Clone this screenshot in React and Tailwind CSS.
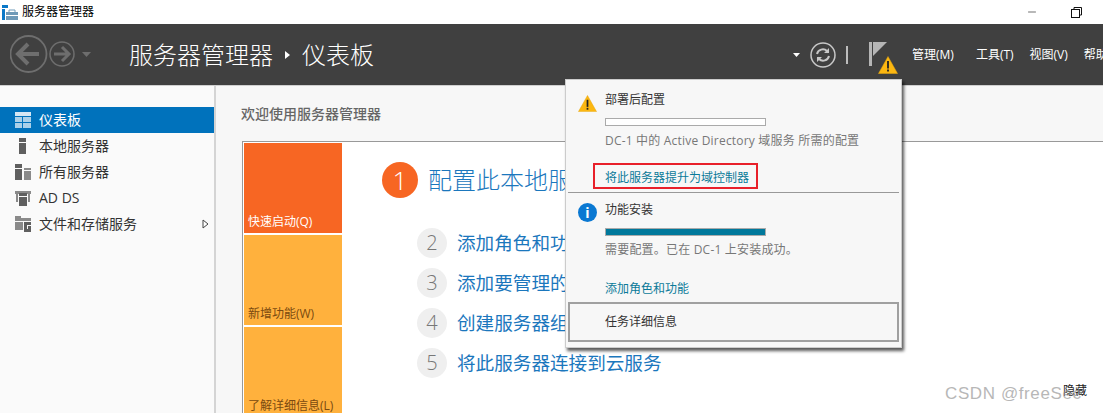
import { Minus } from "lucide-react";

const FONT = "font-['Open_Sans','Noto_Sans_CJK_SC',sans-serif]";

function NavIcon({ type, color = "#5f5f5f" }) {
  return (
    <svg width="16" height="16" viewBox="0 0 16 16" fill={color} className="shrink-0">
      {type === "dash" && (
        <>
          <rect x="0" y="0" width="16" height="4" />
          <rect x="0" y="5" width="7" height="5" opacity="0.8" />
          <rect x="8" y="5" width="8" height="5" opacity="0.8" />
          <rect x="0" y="11" width="7" height="5" opacity="0.8" />
          <rect x="8" y="11" width="8" height="5" opacity="0.8" />
        </>
      )}
      {type === "local" && (
        <>
          <rect x="4" y="0" width="7" height="4" />
          <rect x="4" y="5" width="7" height="11" />
        </>
      )}
      {type === "all" && (
        <>
          <rect x="0" y="0" width="7" height="4" />
          <rect x="0" y="5" width="7" height="11" />
          <rect x="9" y="4" width="7" height="2" fill="#8a8a8a" />
          <rect x="9" y="7" width="7" height="9" fill="#8a8a8a" />
        </>
      )}
      {type === "ad" && (
        <>
          <path d="M0 1h16v3h-1v8h-2V4H3v8H1V4H0z" fill="#8a8a8a" />
          <rect x="4" y="3" width="8" height="3" />
          <rect x="4" y="7" width="8" height="9" />
        </>
      )}
      {type === "files" && (
        <>
          <path d="M0 0h6v2h10v3H0z" fill="#8a8a8a" />
          <rect x="0" y="6" width="8" height="8" fill="#8a8a8a" />
          <path d="M9 6h7v10H9z" />
          <path d="M12 9h4v1h-3v3h-1z" fill="#f7f7f7" />
        </>
      )}
    </svg>
  );
}

function NavItem({ icon, label, active, arrow }) {
  return (
    <div className={`flex items-center h-[26px] pl-[15px] pr-[3px] text-[14px] ${active ? "bg-[#0072bc] text-white" : "text-[#333]"}`}>
      <NavIcon type={icon} color={active ? "#d5e7f4" : "#5f5f5f"} />
      <span className="ml-2 flex-1 pb-[2px] whitespace-nowrap">{label}</span>
      {arrow && (
        <svg width="7" height="10" viewBox="0 0 7 10" className="mr-[2px]">
          <path d="M1 1l5 4-5 4z" fill="#fff" stroke="#444" />
        </svg>
      )}
    </div>
  );
}

function Tile({ label, className }) {
  return (
    <div className={`flex items-end pl-1 pb-[3px] text-xs whitespace-nowrap ${className}`}>{label}</div>
  );
}

function Step({ n, label }) {
  return (
    <div className="flex items-center h-[30px] mb-[10px]">
      <div className="w-[30px] h-[30px] rounded-full bg-[#efefef] flex items-center justify-center text-[20px] font-light text-[#777]">{n}</div>
      <span className="ml-[10px] text-[18.6px] text-[#1b77bd] whitespace-nowrap">{label}</span>
    </div>
  );
}

function Warning({ size = 24 }) {
  return (
    <svg width={size} height={size * 0.9} viewBox="0 0 20 18">
      <path d="M10 0.5L19.5 17.5H0.5z" fill="#fcb711" stroke="#e8a80c" strokeWidth="0.5" />
      <rect x="9.1" y="5" width="1.8" height="7.5" fill="#222" />
      <rect x="9.1" y="13.5" width="1.8" height="2" fill="#222" />
    </svg>
  );
}

function NotificationPanel() {
  return (
    <div className="absolute left-[565px] top-[79px] w-[337px] h-[269px] bg-[#f7f7f7] border border-[#ccc] shadow-[2px_3px_3px_rgba(0,0,0,0.65)] flex flex-col text-xs">
      <div className="flex h-[112px] pl-[12px]">
        <div className="pt-[15px] w-[27px]"><Warning size={19} /></div>
        <div className="pt-[11px] flex flex-col">
          <span className="text-[#333] leading-[18px]">部署后配置</span>
          <div className="w-[161px] h-[8px] mt-[9px] bg-white border border-[#aaa]"></div>
          <span className="mt-[6px] text-[#777] leading-[18px] tracking-[0.2px] whitespace-nowrap">DC-1 中的 Active Directory 域服务 所需的配置</span>
          <span className="mt-[13px] ml-[-12px] w-[165px] h-[26px] pl-[10px] border-[2px] border-[#e8202a] text-[#0b7a99] leading-[26px] whitespace-nowrap">将此服务器提升为域控制器</span>
        </div>
      </div>
      <div className="h-px mx-[2px] bg-[#999]"></div>
      <div className="flex flex-1 pl-[12px]">
        <div className="pt-[10px] w-[27px]">
          <div className="w-[19px] h-[19px] rounded-full bg-[#0a78d2] flex items-center justify-center text-white text-[14px] font-bold leading-none">i</div>
        </div>
        <div className="pt-[8px] flex flex-col">
          <span className="text-[#333] leading-[18px]">功能安装</span>
          <div className="w-[161px] h-[8px] mt-[9px] bg-[#00789b] border border-[#aaa]"></div>
          <span className="mt-[5px] text-[#777] leading-[18px] tracking-[0.2px] whitespace-nowrap">需要配置。已在 DC-1 上安装成功。</span>
          <span className="mt-[21px] text-[#0b7a99] leading-[18px] whitespace-nowrap">添加角色和功能</span>
        </div>
      </div>
      <div className="mx-[2px] mb-[5px] h-[40px] border-[2px] border-[#a0a0a0] flex items-center pl-[35px] text-[#333]">任务详细信息</div>
    </div>
  );
}

export default function App() {
  return (
    <div className={`relative w-[1103px] h-[413px] overflow-hidden bg-white flex flex-col ${FONT}`}>
      {/* title bar */}
      <div className="h-[24px] flex items-center pl-[2px] text-xs text-black">
        <svg width="16" height="16" viewBox="0 0 16 16">
          <rect x="0" y="1" width="6" height="3" fill="#0a78c8" />
          <rect x="0" y="5" width="3" height="11" fill="#0a78c8" />
          <path d="M4 8h12v8H4z" fill="#6f9ab8" />
          <path d="M7 8V6h6v2" fill="none" stroke="#6f9ab8" />
          <rect x="4" y="11" width="12" height="1" fill="#fff" />
        </svg>
        <span className="ml-[4px]">服务器管理器</span>
        <div className="ml-auto flex items-center mr-[21px]">
          <Minus size={12} strokeWidth={1.2} color="#111" />
          <svg width="11" height="11" viewBox="0 0 11 11" className="ml-[33px]" fill="none" stroke="#111">
            <rect x="0.5" y="2.5" width="8" height="8" />
            <path d="M3 2.5v-2h7.5v7.5h-2" />
          </svg>
        </div>
      </div>

      {/* header */}
      <div className="h-[62px] bg-[#404040] flex items-center relative border-b border-[#d0d0d0]">
        <svg width="84" height="40" viewBox="0 0 84 40" className="ml-[10px] shrink-0" fill="none" stroke="#6e6e6e">
          <circle cx="18.500" cy="19" r="18" strokeWidth="1.800" />
          <path d="M8 19h21M18 9l-10 10 10 10" strokeWidth="4" />
          <circle cx="52" cy="19" r="12" strokeWidth="1.500" />
          <path d="M44 19h15M52 12l7 7-7 7" strokeWidth="3" />
          <path d="M72 17h9l-4.500 5z" fill="#6e6e6e" stroke="none" />
        </svg>
        <span className="ml-[35px] text-[24px] font-light text-white whitespace-nowrap">服务器管理器</span>
        <svg width="6" height="8" viewBox="0 0 6 8" className="ml-[12px] mr-[11px] shrink-0"><path d="M0 0l5 4-5 4z" fill="#fff" /></svg>
        <span className="text-[24px] font-light text-white">仪表板</span>

        <div className="ml-auto flex items-center text-xs text-white whitespace-nowrap w-[310px] shrink-0">
          <svg width="7" height="4" viewBox="0 0 7 4" className="shrink-0"><path d="M0 0h7L3.500 4z" fill="#fff" /></svg>
          <svg width="26" height="26" viewBox="0 0 26 26" className="ml-[10px] shrink-0" fill="none" stroke="#c8c8c8">
            <circle cx="13" cy="13" r="12" strokeWidth="1.500" />
            <path d="M7 12a6 6 0 0 1 10-3l1.500 1.500M19 14a6 6 0 0 1-10 3l-1.500-1.500" strokeWidth="2" />
            <path d="M19 6v5h-5zM7 20v-5h5z" fill="#c8c8c8" stroke="none" />
          </svg>
          <div className="w-[2px] h-[18px] bg-[#bdbdbd] ml-[10px] shrink-0"></div>
          <div className="ml-[21px] relative w-[34px] h-[48px] mt-[22px] shrink-0">
            <svg width="18" height="24" viewBox="0 0 18 24" className="absolute left-0 top-0">
              <rect x="0" y="0" width="3" height="24" fill="#b5b5b5" />
              <path d="M4 0h14L4 14z" fill="#b5b5b5" />
            </svg>
            <div className="absolute left-[9px] top-[14px]"><Warning size={20} /></div>
          </div>
          <span className="ml-[9px] shrink-0">管理(M)</span>
          <span className="ml-[22px] shrink-0">工具(T)</span>
          <span className="ml-[16px] shrink-0">视图(V)</span>
          <span className="ml-[16px] shrink-0">帮助(H)</span>
        </div>
      </div>

      {/* body */}
      <div className="flex flex-1 min-h-0 bg-[#f7f7f7]">
        <div className="w-[216px] shrink-0 pt-[21px] bg-[#fafafa] border-r-[2px] border-[#d4d4d4]">
          <NavItem icon="dash" label="仪表板" active />
          <NavItem icon="local" label="本地服务器" />
          <NavItem icon="all" label="所有服务器" />
          <NavItem icon="ad" label="AD DS" />
          <NavItem icon="files" label="文件和存储服务" arrow />
        </div>
        <div className="flex-1 min-w-0 pl-[25px] pt-[18px]">
          <div className="text-[14px] font-medium text-[#666] leading-[20px]">欢迎使用服务器管理器</div>
          <div className="relative mt-[17px] ml-[1px] h-[300px] bg-white border-t border-l border-[#999] flex">
            <div className="w-[98px] ml-[1px] mt-[1px] flex flex-col gap-[2px] shrink-0">
              <Tile label="快速启动(Q)" className="h-[90px] bg-[#f76623] text-white" />
              <Tile label="新增功能(W)" className="h-[90px] bg-[#ffb13d] text-[#7a4a10]" />
              <Tile label="了解详细信息(L)" className="h-[90px] bg-[#ffb13d] text-[#7a4a10]" />
            </div>
            <div className="pl-[40px] pt-[20px] flex-1">
              <div className="flex items-center h-[36px]">
                <div className="w-[36px] h-[36px] rounded-full bg-[#f76623] flex items-center justify-center text-[26px] font-light text-white">1</div>
                <span className="ml-[10px] text-[24px] font-light text-[#1b77bd] whitespace-nowrap">配置此本地服务器</span>
              </div>
              <div className="ml-[35px] mt-[30px]">
                <Step n="2" label="添加角色和功能" />
                <Step n="3" label="添加要管理的服务器" />
                <Step n="4" label="创建服务器组" />
                <Step n="5" label="将此服务器连接到云服务" />
              </div>
            </div>
            <span className="absolute left-[820px] top-[241px] text-xs text-[#222]">隐藏</span>
          </div>
        </div>
      </div>

      <NotificationPanel />

      <span className="absolute left-[945px] top-[381px] text-[17px] tracking-[0.6px] text-[#888] opacity-60 whitespace-nowrap font-['Liberation_Sans',sans-serif]">CSDN @freeSec</span>
    </div>
  );
}
